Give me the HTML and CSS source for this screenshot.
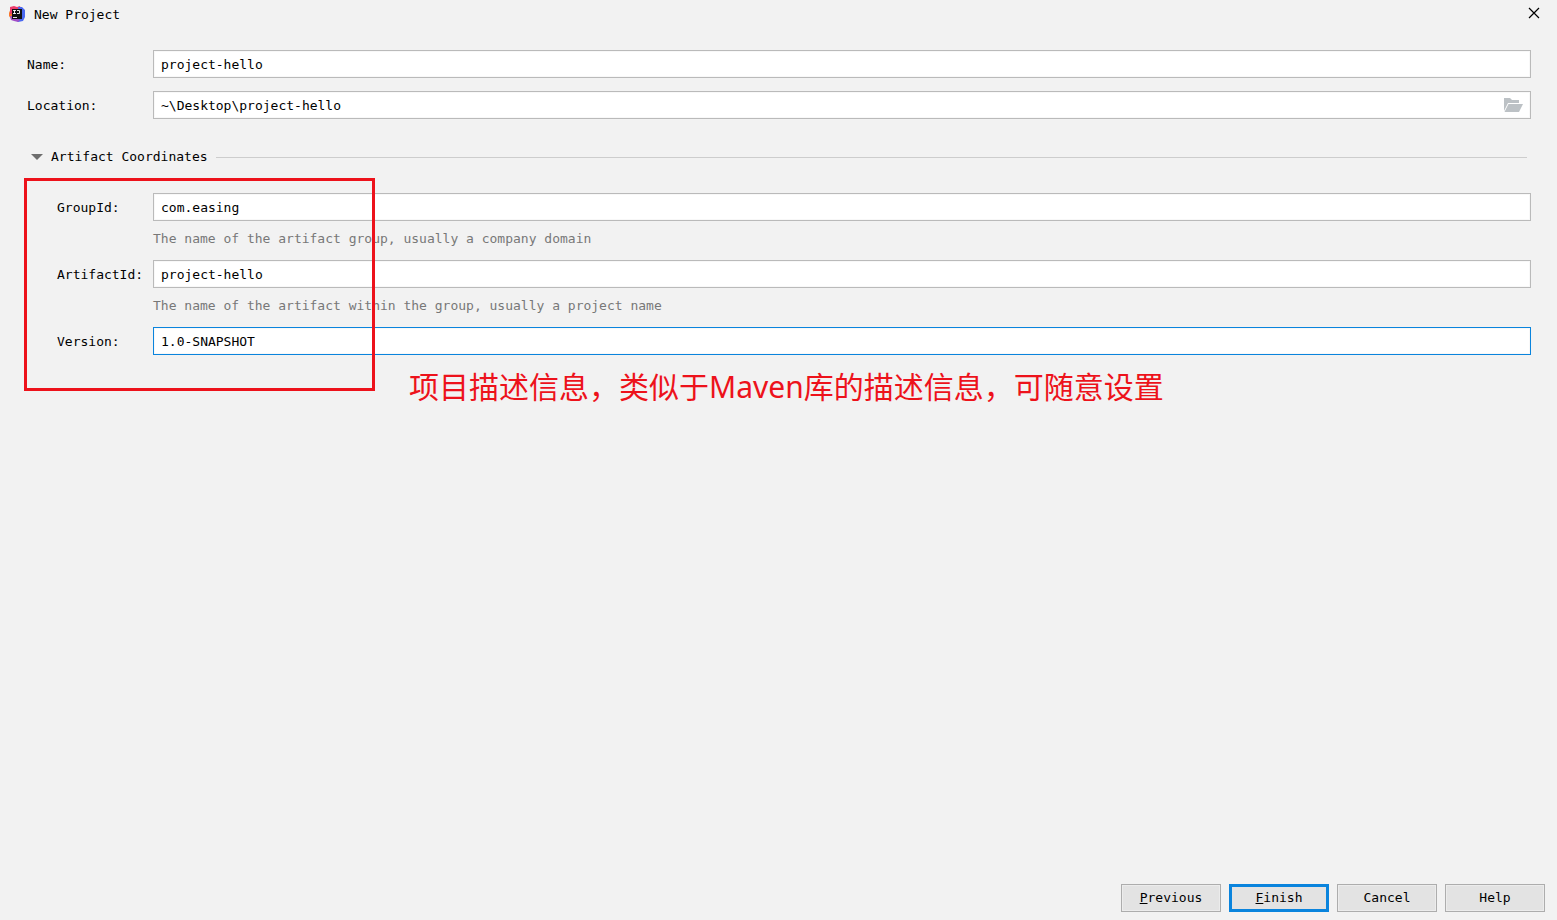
FILE: index.html
```html
<!DOCTYPE html>
<html lang="en">
<head>
<meta charset="utf-8">
<title>New Project</title>
<link rel="stylesheet" href="styles.css">
</head>
<body>
<div class="dialog">
  <header class="titlebar">
    <svg class="logo" viewBox="0 0 18 18" aria-hidden="true">
      <path fill="#f9762b" d="M1 8 3 3 9 4 8 13 4 15 1 11z"/>
      <path fill="#ed3a6a" d="M2 5V2l4-1 3 1 3-1 1 3-4 4-7 1z"/>
      <path fill="#4a68f0" d="M10 2 14 2 17 5 17 12 15 16 10 17 8 15 11 11z"/>
      <path fill="#a04fc8" d="M2 11 5 11 12 15 10 17 6 16 3 15z"/>
      <path fill="#101014" d="M4 4h10v10H4z"/>
      <path fill="none" stroke="#fff" stroke-width=".9" d="M5 5.500h3M6.500 5v4M5 8.500h3M9 5.500h2.500v3H9M5 12.500h4"/>
    </svg>
    <h1 class="title">New Project</h1>
    <button class="close" type="button" aria-label="Close">
      <svg class="close-icon" viewBox="0 0 12 12"><path d="M1 1 11 11M11 1 1 11" fill="none" stroke="#000" stroke-width="1.200"/></svg>
    </button>
  </header>

  <form class="form">
    <main class="content">
      <div class="row">
        <label class="label" for="name">Name:</label>
        <input class="field" id="name" type="text" value="project-hello" spellcheck="false">
      </div>
      <div class="row">
        <label class="label" for="location">Location:</label>
        <div class="field path">
          <input class="path-input" id="location" type="text" value="~\Desktop\project-hello" spellcheck="false">
          <button class="browse" type="button" aria-label="Browse">
            <svg class="folder" viewBox="0 0 20 16"><path fill="#bcc1c5" d="M1 14V1h6l2 2h7v3H5L1 14zM5.500 7H20l-4 8H1.500z"/></svg>
          </button>
        </div>
      </div>

      <section class="artifact">
        <h2 class="heading">
          <button class="toggle" type="button" aria-expanded="true">
            <svg class="arrow" viewBox="0 0 12 6"><path fill="#6e6e6e" d="M0 0h12L6 6z"/></svg>
            Artifact Coordinates
          </button>
        </h2>
        <div class="row nested">
          <label class="label" for="group">GroupId:</label>
          <input class="field" id="group" type="text" value="com.easing" spellcheck="false">
        </div>
        <p class="hint">The name of the artifact group, usually a company domain</p>
        <div class="row nested">
          <label class="label" for="artifact">ArtifactId:</label>
          <input class="field" id="artifact" type="text" value="project-hello" spellcheck="false">
        </div>
        <p class="hint">The name of the artifact within the group, usually a project name</p>
        <div class="row nested">
          <label class="label" for="version">Version:</label>
          <input class="field active" id="version" type="text" value="1.0-SNAPSHOT" spellcheck="false">
        </div>
        <div class="marker"></div>
      </section>
      <p class="note" lang="zh-CN">项目描述信息，类似于Maven库的描述信息，可随意设置</p>
    </main>

    <footer class="actions">
      <button class="button" type="button"><span><u>P</u>revious</span></button>
      <button class="button primary" type="button"><span><u>F</u>inish</span></button>
      <button class="button" type="button">Cancel</button>
      <button class="button" type="button">Help</button>
    </footer>
  </form>
</div>
</body>
</html>
```
FILE: styles.css
```css
* { box-sizing: border-box; }

body {
  margin: 0;
  background: #f2f2f2;
  color: #000;
  font: 13px/20px "DejaVu Sans Mono", monospace;
}

button, input { font: inherit; color: inherit; }

.dialog {
  display: flex;
  flex-direction: column;
  min-height: 100vh;
}

.titlebar {
  display: flex;
  align-items: center;
  gap: 8px;
  height: 28px;
  padding: 0 17px 0 8px;
}

.logo { width: 18px; height: 18px; }
.title { flex: 1; margin: 0; padding-top: 2px; font-size: 13px; font-weight: 400; }

.close, .browse, .toggle {
  display: flex;
  align-items: center;
  padding: 0;
  border: 0;
  background: none;
}
.close { padding-bottom: 2px; }
.close-icon { width: 12px; height: 12px; }

.form {
  flex: 1;
  display: flex;
  flex-direction: column;
}

.content {
  flex: 1;
  padding: 22px 26px 0 27px;
}

.row {
  display: grid;
  grid-template-columns: 126px 1fr;
  align-items: center;
  margin-bottom: 13px;
}
.nested { margin: 0; }
.label { padding-top: 2px; white-space: nowrap; }
.nested .label { padding-left: 30px; }

.field {
  width: 100%;
  height: 28px;
  padding: 0 7px;
  border: 1px solid #bababa;
  border-radius: 0;
  outline: 0;
  background: #fff;
  box-shadow: inset 0 0 0 1px #f8f8f8;
}
.active { border-color: #0a84dd; }

.path { display: flex; align-items: center; }
.path-input {
  flex: 1;
  min-width: 0;
  padding: 2px 0 0;
  border: 0;
  outline: 0;
  background: none;
}
.folder { width: 20px; height: 16px; }

.artifact { position: relative; padding-top: 15px; }

.heading {
  display: flex;
  align-items: center;
  gap: 8px;
  margin: 0 4px 26px;
  font-size: 13px;
  font-weight: 400;
}
.heading::after {
  content: "";
  flex: 1;
  height: 1px;
  background: #cdcdcd;
}
.toggle { gap: 8px; }
.arrow { width: 12px; height: 6px; }

.hint {
  margin: 8px 0 11px 126px;
  color: #787878;
}

.marker {
  position: absolute;
  top: 46px;
  bottom: -36px;
  left: -3px;
  width: 351px;
  border: 3px solid #ed121b;
  pointer-events: none;
}

.note {
  margin: 12px 0 0 382px;
  color: #ed121b;
  font: 400 30px/40px "Noto Sans", "Noto Sans CJK SC", sans-serif;
}

.actions {
  display: flex;
  justify-content: flex-end;
  gap: 8px;
  padding: 8px 12px;
}

.button {
  width: 100px;
  height: 28px;
  padding: 0;
  border: 1px solid #adadad;
  background: #e3e3e3;
  box-shadow: inset 0 0 0 1px #ececec;
}
.primary { border: 3px solid #0a84dd; box-shadow: none; }
```
